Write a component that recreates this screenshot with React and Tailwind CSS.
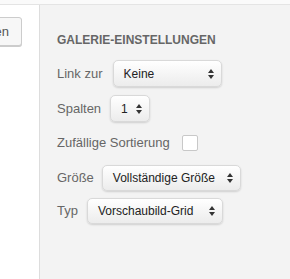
import React from 'react';

// up/down arrows of a native mac select
const Arrows = () => (
  <svg width="6" height="10" viewBox="0 0 6 10" className="shrink-0">
    <path d="M0 4 L3 0 L6 4 Z" fill="#333" />
    <path d="M0 6 L3 10 L6 6 Z" fill="#333" />
  </svg>
);

const Select = ({ value, className }) => (
  <div
    className={`flex items-center justify-between rounded-[5px] border border-[#d9d9d9] bg-gradient-to-b from-white to-[#ececec] pl-[10px] pr-[7px] text-[12px] text-[#222] shadow-[0_1px_2px_rgba(0,0,0,0.15)] ${className}`}
  >
    <span className="whitespace-nowrap">{value}</span>
    <Arrows />
  </div>
);

const App = () => {
  return (
    <div className="flex h-screen flex-col bg-white font-['Liberation_Sans',Arial,sans-serif]">
      {/* top strip */}
      <div className="h-[5px] shrink-0 border-b border-[#e4e4e4] bg-[#fafafa]" />

      <div className="flex flex-1">
        {/* left column with clipped button */}
        <div className="flex w-[40px] shrink-0 justify-end overflow-hidden border-r border-[#dddddd] bg-white pr-[17px] pt-[12px]">
          <div className="flex h-[29px] shrink-0 items-center whitespace-nowrap rounded-[3px] border border-[#cccccc] bg-[#f7f7f7] pl-[10px] pr-[12px] text-[13px] text-[#555] shadow-[0_1px_0_#cccccc]">
            Galerie einfügen
          </div>
        </div>

        {/* gallery settings panel */}
        <div className="flex-1 bg-[#f3f3f3] pl-[17px] pt-[27px]">
          <h2 className="text-[12px] font-bold uppercase leading-[16px] text-[#666]">
            Galerie-Einstellungen
          </h2>

          <div className="mt-[12px] flex items-center text-[13px] text-[#666]">
            <span className="mr-[10px]">Link zur</span>
            <Select value="Keine" className="h-[27px] w-[109px]" />
          </div>

          <div className="mt-[8px] flex items-center text-[13px] text-[#666]">
            <span className="mr-[9px]">Spalten</span>
            <Select value="1" className="h-[27px] w-[40px]" />
          </div>

          <div className="mt-[11px] flex items-center text-[13px] text-[#666]">
            <span className="mr-[12px]">Zufällige Sortierung</span>
            <div className="h-[16px] w-[16px] rounded-[2px] border border-[#c8c8c8] bg-white" />
          </div>

          <div className="mt-[12px] flex items-center text-[13px] text-[#666]">
            <span className="mr-[8px]">Größe</span>
            <Select value="Vollständige Größe" className="h-[26px] w-[139px]" />
          </div>

          <div className="mt-[7px] flex items-center text-[13px] text-[#666]">
            <span className="mr-[9px]">Typ</span>
            <Select value="Vorschaubild-Grid" className="h-[26px] w-[136px]" />
          </div>
        </div>
      </div>
    </div>
  );
};

export default App;
